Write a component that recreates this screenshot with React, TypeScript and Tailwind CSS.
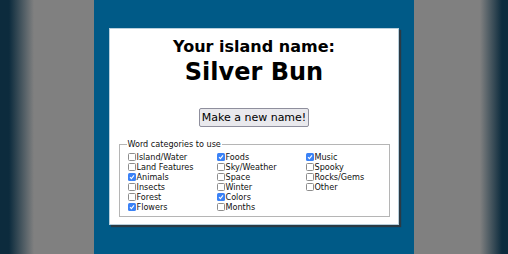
const categories: [string, boolean][][] = [
  [
    ["Island/Water", false],
    ["Land Features", false],
    ["Animals", true],
    ["Insects", false],
    ["Forest", false],
    ["Flowers", true],
  ],
  [
    ["Foods", true],
    ["Sky/Weather", false],
    ["Space", false],
    ["Winter", false],
    ["Colors", true],
    ["Months", false],
  ],
  [
    ["Music", true],
    ["Spooky", false],
    ["Rocks/Gems", false],
    ["Other", false],
  ],
];

function Box({ checked }: { checked: boolean }) {
  if (checked) {
    return (
      <span className="flex h-[8px] w-[8px] shrink-0 items-center justify-center rounded-[1.5px] bg-[#3b82f6]">
        <svg width="6" height="6" viewBox="0 0 6 6">
          <path d="M1 3.2 L2.4 4.6 L5 1.4" stroke="white" strokeWidth="1.1" fill="none" />
        </svg>
      </span>
    );
  }
  return <span className="h-[8px] w-[8px] shrink-0 rounded-[1.5px] border border-[#8d8d8d] bg-white" />;
}

export default function App() {
  return (
    <div className="flex h-[254px] w-[508px] overflow-hidden font-['DejaVu_Sans',sans-serif]">
      <div className="w-[94px] bg-[linear-gradient(to_right,#0c2b3d_0px,#0c2b3d_9px,#808080_34px)]" />
      <div className="w-[320px] bg-[#005a87] px-[15px] pt-[28px]">
        <div className="flex h-[197px] flex-col items-center border border-[#b8cfdc] bg-white shadow-[2px_2px_1px_#2a3a44]">
          <div className="mt-[8px] text-[16px] font-bold leading-[20px] text-black">Your island name:</div>
          <div className="mt-[1px] text-[24px] font-bold leading-[28px] text-black">Silver Bun</div>
          <button className="mt-[22px] h-[19px] rounded-[2px] border border-[#8f8f9d] bg-[#e9e9ed] px-[2px] text-[11px] leading-[16px] text-black">
            Make a new name!
          </button>
          <fieldset className="mt-[12px] w-[271px] min-w-0 border border-[#b5b5b5] px-[8px] pt-[3px] pb-[4px] font-['DejaVu_Sans_Condensed','DejaVu_Sans',sans-serif] text-[9px] leading-[10px] text-[#111]">
            <legend className="ml-[-1px] px-[1px] text-[9px] leading-[10px]">Word categories to use</legend>
            <div className="flex">
              {categories.map((col, i) => (
                <div key={i} className={i < 2 ? "flex w-[89px] flex-col" : "flex flex-1 flex-col"}>
                  {col.map(([name, checked]) => (
                    <label key={name} className="flex h-[10px] items-center gap-[1px] whitespace-nowrap">
                      <Box checked={checked} />
                      <span>{name}</span>
                    </label>
                  ))}
                </div>
              ))}
            </div>
          </fieldset>
        </div>
      </div>
      <div className="w-[94px] bg-[linear-gradient(to_right,#808080_0px,#808080_66px,#0c2b3d_88px)]" />
    </div>
  );
}
